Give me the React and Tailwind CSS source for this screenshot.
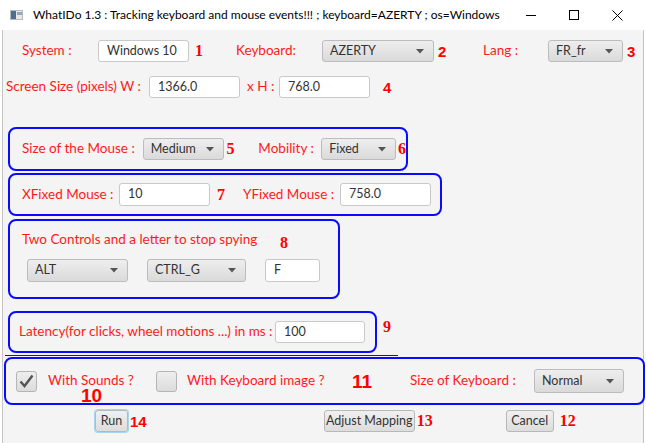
import React from "react";

const font = { fontFamily: '"Lato", "Noto Sans", sans-serif' };

function Combo({ className, label }) {
  return (
    <div
      className={`flex items-center justify-between rounded-[3px] border border-[#bcbcbc] bg-linear-to-b from-[#eeeeee] to-[#dadada] pl-[7px] pr-[9px] text-[12.5px] text-[#333] ${className}`}
    >
      <span className="whitespace-nowrap leading-none">{label}</span>
      <svg width="8" height="5" viewBox="0 0 8 5">
        <path d="M0 0 L8 0 L4 4.5 Z" fill="#555" />
      </svg>
    </div>
  );
}

function Field({ className, value }) {
  return (
    <div
      className={`flex items-center rounded-[3px] border border-[#c9c9c9] bg-white pl-[8px] text-[12.5px] text-[#333] ${className}`}
    >
      <span className="leading-none">{value}</span>
    </div>
  );
}

function Label({ className, children }) {
  return (
    <div className={`flex items-center text-[13.5px] leading-none text-[#ff1a1a] ${className}`}>
      <span className="whitespace-nowrap">{children}</span>
    </div>
  );
}

function NumSerif({ className, children }) {
  return (
    <span
      className={`text-[16px] font-bold leading-none text-[#ff0000] ${className}`}
      style={{ fontFamily: '"Liberation Serif", serif' }}
    >
      {children}
    </span>
  );
}

function NumSans({ className, children }) {
  return (
    <span
      className={`font-bold leading-none text-[#ff0000] ${className}`}
      style={{ fontFamily: '"Liberation Sans", sans-serif' }}
    >
      {children}
    </span>
  );
}

function Check({ checked, className }) {
  return (
    <div
      className={`flex h-[21px] w-[21px] items-center justify-center rounded-[3px] border border-[#b5b5b5] bg-linear-to-b from-[#eeeeee] to-[#dcdcdc] ${className}`}
    >
      {checked && (
        <svg width="15" height="14" viewBox="0 0 15 14">
          <path d="M1.5 7.5 L5.5 12 L13.5 1.5" fill="none" stroke="#555" strokeWidth="2.4" />
        </svg>
      )}
    </div>
  );
}

function Button({ className, children }) {
  return (
    <div
      className={`flex h-[22px] items-center justify-center whitespace-nowrap rounded-[3px] border border-[#b8b8b8] bg-linear-to-b from-[#f0f0f0] to-[#dddddd] text-[12.5px] text-[#333] ${className}`}
    >
      {children}
    </div>
  );
}

export default function App() {
  return (
    <div className="h-[443px] w-[646px] overflow-hidden bg-white" style={font}>
      {/* title bar */}
      <div className="flex h-[30px] items-center bg-white">
        <div className="ml-[10px] flex h-[10px] w-[13px] border border-[#b9b9b9] bg-[#e8e8e8]">
          <div className="h-full w-[5px] bg-[#4a6f92]" />
          <div className="ml-[1px] mt-[1px] h-[3px] w-[5px] bg-[#8fa8c0]" />
        </div>
        <span className="ml-[10px] text-[12px] text-black">
          WhatIDo 1.3 : Tracking keyboard and mouse events!!! ; keyboard=AZERTY ; os=Windows
        </span>
        <div className="ml-auto flex items-center">
          <div className="flex w-[46px] justify-center">
            <div className="h-[1px] w-[10px] bg-black" />
          </div>
          <div className="flex w-[40px] justify-center">
            <div className="h-[10px] w-[10px] border border-black" />
          </div>
          <div className="mr-[6px] flex w-[46px] justify-center">
            <svg width="11" height="11" viewBox="0 0 11 11">
              <path d="M0.5 0.5 L10.5 10.5 M10.5 0.5 L0.5 10.5" stroke="#000" strokeWidth="1" />
            </svg>
          </div>
        </div>
      </div>

      {/* body */}
      <div className="relative mx-[2px] flex h-[413px] flex-col border-x border-[#c4c4c4] bg-[#f4f4f4]">
        {/* row 1 */}
        <div className="mt-[10px] flex h-[22px] items-center">
          <Label className="ml-[19px] w-[76px]">System :</Label>
          <Field className="h-[22px] w-[91px]" value="Windows 10" />
          <div className="flex w-[47px] items-center pl-[6px]">
            <NumSerif>1</NumSerif>
          </div>
          <Label className="w-[86px]">Keyboard:</Label>
          <Combo className="h-[22px] w-[112px]" label="AZERTY" />
          <div className="flex w-[49px] items-center pl-[4px]">
            <NumSans className="text-[15px]">2</NumSans>
          </div>
          <Label className="w-[65px]">Lang :</Label>
          <Combo className="h-[22px] w-[75px]" label="FR_fr" />
          <NumSans className="ml-[4px] text-[15px]">3</NumSans>
        </div>

        {/* row 2 */}
        <div className="mt-[14px] flex h-[22px] items-center">
          <Label className="ml-[3px] w-[143px]">Screen Size (pixels) W :</Label>
          <Field className="h-[22px] w-[91px]" value="1366.0" />
          <Label className="w-[39px] pl-[7px]">x H :</Label>
          <Field className="h-[22px] w-[91px]" value="768.0" />
          <NumSans className="ml-[13px] text-[15px]">4</NumSans>
        </div>

        {/* box 1 */}
        <div className="ml-[5px] mt-[29px] flex h-[44px] w-[400px] items-center rounded-[8px] border-2 border-[#0a0aff]">
          <Label className="ml-[12px] w-[121px]">Size of the Mouse :</Label>
          <Combo className="h-[22px] w-[82px]" label="Medium" />
          <div className="flex w-[34px] items-center pl-[2px]">
            <NumSerif>5</NumSerif>
          </div>
          <Label className="w-[63px]">Mobility :</Label>
          <Combo className="h-[22px] w-[75px]" label="Fixed" />
          <NumSerif className="ml-[2px]">6</NumSerif>
        </div>

        {/* box 2 */}
        <div className="ml-[5px] mt-[2px] flex h-[43px] w-[434px] items-center rounded-[8px] border-2 border-[#0a0aff]">
          <Label className="ml-[12px] w-[97px]">XFixed Mouse :</Label>
          <Field className="h-[23px] w-[91px]" value="10" />
          <div className="flex w-[33px] items-center pl-[7px]">
            <NumSerif>7</NumSerif>
          </div>
          <Label className="w-[97px]">YFixed Mouse :</Label>
          <Field className="h-[23px] w-[91px]" value="758.0" />
        </div>

        {/* box 3 */}
        <div className="ml-[5px] mt-[3px] flex h-[80px] w-[332px] flex-col rounded-[8px] border-2 border-[#0a0aff]">
          <div className="mt-[11px] flex h-[16px] items-center">
            <Label className="ml-[12px] w-[258px]">Two Controls and a letter to stop spying</Label>
            <NumSerif className="mt-[6px]">8</NumSerif>
          </div>
          <div className="mt-[11px] flex items-center">
            <Combo className="ml-[17px] h-[23px] w-[101px]" label="ALT" />
            <Combo className="ml-[19px] h-[23px] w-[99px]" label="CTRL_G" />
            <Field className="ml-[19px] h-[23px] w-[55px]" value="F" />
          </div>
        </div>

        {/* box 4 */}
        <div className="mt-[12px] flex items-start">
          <div className="ml-[5px] flex h-[42px] w-[369px] items-center rounded-[8px] border-2 border-[#0a0aff]">
            <Label className="ml-[9px] w-[256px]">Latency(for clicks, wheel motions ...) in ms :</Label>
            <Field className="h-[22px] w-[90px]" value="100" />
          </div>
          <NumSerif className="ml-[6px] mt-[8px]">9</NumSerif>
        </div>

        {/* thin line */}
        <div className="ml-[2px] mt-[2px] h-[1px] w-[393px] bg-[#0a0aff]" />

        {/* box 5 */}
        <div className="relative ml-[1px] mt-[1px] flex h-[48px] w-[641px] items-center rounded-[8px] border-2 border-[#0a0aff]">
          <Check checked className="ml-[10px]" />
          <Label className="ml-[11px] w-[108px]">With Sounds ?</Label>
          <Check className="" />
          <Label className="ml-[10px] w-[165px]">With Keyboard image ?</Label>
          <NumSans className="w-[58px] text-[19px]">11</NumSans>
          <Label className="w-[124px]">Size of Keyboard :</Label>
          <Combo className="h-[24px] w-[90px]" label="Normal" />
          <NumSans className="absolute left-[75px] top-[27px] text-[19px]">10</NumSans>
        </div>

        {/* buttons */}
        <div className="mt-[5px] flex h-[22px] items-center">
          <Button className="ml-[92px] w-[33px] border-[#3a9ad9] shadow-[0_0_0_1px_#a9d4f0]">Run</Button>
          <NumSans className="ml-[2px] text-[15px]">14</NumSans>
          <Button className="ml-[177px] w-[91px]">Adjust Mapping</Button>
          <NumSerif className="ml-[2px]">13</NumSerif>
          <Button className="ml-[73px] w-[48px]">Cancel</Button>
          <NumSerif className="ml-[6px]">12</NumSerif>
        </div>
      </div>
    </div>
  );
}
